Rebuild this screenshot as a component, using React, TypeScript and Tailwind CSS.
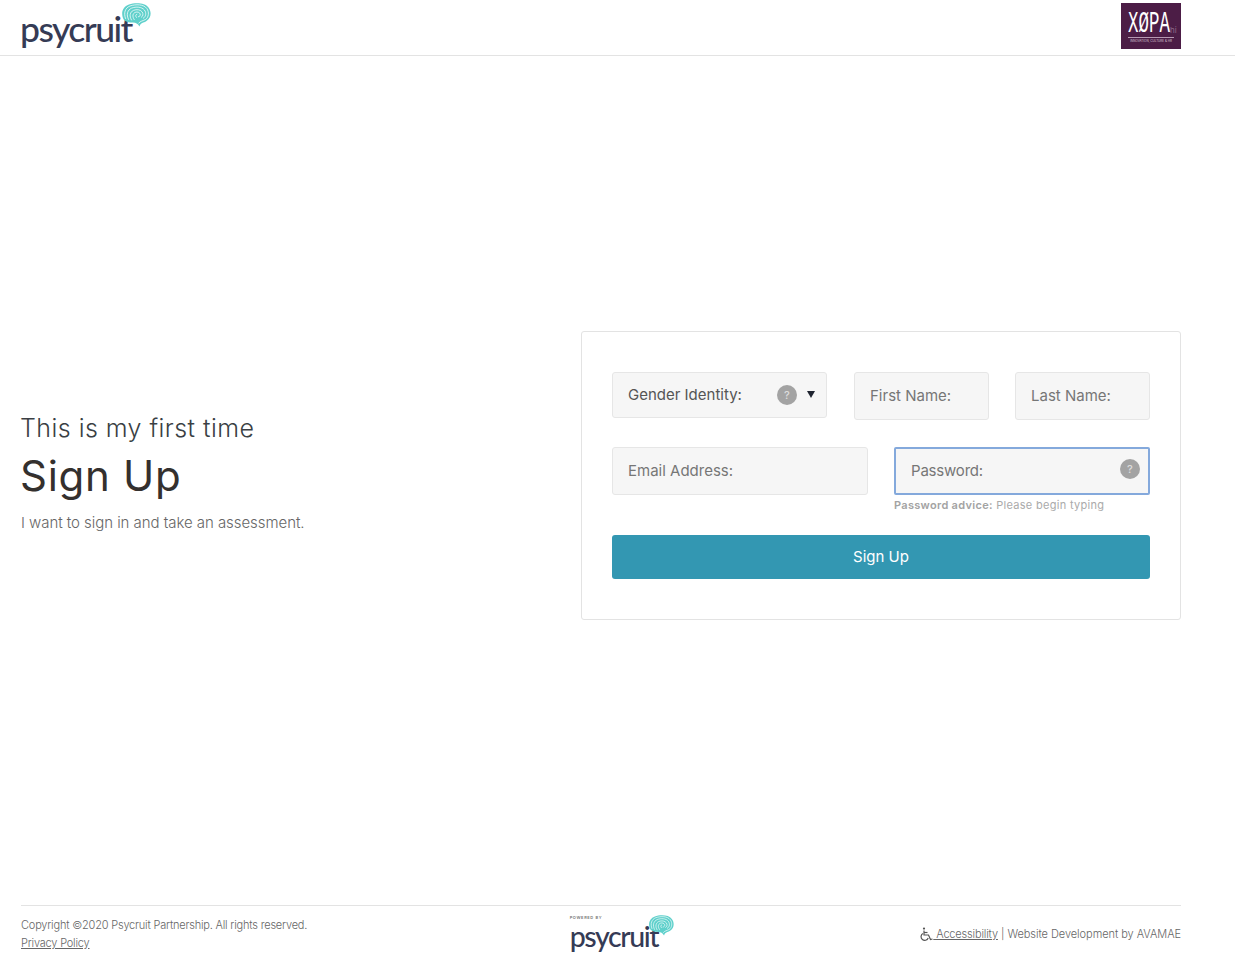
import React from "react";

const FONT = { fontFamily: '"Inter", "Open Sans", "Liberation Sans", sans-serif' };

function Brain({ className }: { className?: string }) {
  return (
    <svg viewBox="0 0 30 24" className={className} fill="none" strokeLinecap="round">
      <path d="M3 17 C-0.5 11 1 4 8 1.5 C14 -0.5 24 -0.5 27.5 4.5 C31 9 30 15.5 25.5 18 C22.5 20 19.5 19.5 18.5 23.5 C16.5 20.5 15 19.5 12 19.5 C8 19.5 5 19 3 17 Z" fill="#5fd0cb" />
      <g stroke="#ffffff" strokeWidth="0.75">
        <path d="M4.5 15.5 C2.5 10 4 5 9 3 C15 1 22.5 1.2 25.8 5.5 C28.4 9 27.8 14.5 24.3 16.6 C21.5 18 19.5 18 17.8 20" />
        <path d="M7.5 16.5 C5 11.5 6.5 7 10.5 5.2 C15 3.4 20.8 3.8 23.4 7 C25.6 10 25 13.6 22.4 15.2" />
        <path d="M10.5 17 C8 13 9 9 12.4 7.4 C15.6 6 19.6 6.6 21.2 9 C22.6 11.2 22 13.2 20.4 14.2" />
        <path d="M13.2 16.6 C11 13.4 11.8 10.4 14.2 9.4 C16.4 8.6 18.6 9.2 19.2 11 C19.6 12.4 18.8 13.6 17.4 13.8" />
        <path d="M15.4 14.4 C14.2 13 14.6 11.6 15.8 11.3" />
      </g>
    </svg>
  );
}

function Logo({ small }: { small?: boolean }) {
  return small ? (
    <div className="relative w-[104px] h-[36px]">
      <span className="absolute left-0 top-[5px] text-[28.5px] leading-[32px] font-medium tracking-[-1.4px] text-[#353b55]" style={{ fontFamily: '"Lato", "Noto Sans", sans-serif' }}>psycruit</span>
      <Brain className="absolute left-[78px] top-0 w-[26px] h-[21px]" />
    </div>
  ) : (
    <div className="relative w-[130px] h-[46px]">
      <span className="absolute left-[-1px] top-[7px] text-[35.5px] leading-[38px] font-medium tracking-[-1.55px] text-[#353b55]" style={{ fontFamily: '"Lato", "Noto Sans", sans-serif' }}>psycruit</span>
      <Brain className="absolute left-[100px] top-0 w-[30px] h-[24px]" />
    </div>
  );
}

function Help() {
  return (
    <span className="flex h-5 w-5 items-center justify-center rounded-full bg-[#a3a3a3] text-[11px] font-medium text-[#dcdcdc]">?</span>
  );
}

const inputClass =
  "h-12 rounded-[3px] border border-[#e6e6e6] bg-[#f6f6f6] pl-[15px] pr-4 pb-[2px] text-[15px] text-[#333] outline-none placeholder:text-[#767676]";

export default function App() {
  return (
    <div className="flex h-[961px] w-full flex-col overflow-hidden bg-white" style={FONT}>
      <header className="flex h-[56px] shrink-0 items-start justify-between border-b border-[#e3e3e3] pl-[21px] pr-[54px]">
        <div className="pt-[3px]"><Logo /></div>
        <div className="mt-[3px] flex h-[46px] w-[60px] flex-col items-start justify-center bg-[#4c1d46] pl-[7px] pt-[3px] text-white">
          <span className="flex items-end">
            <span className="mx-[-15px] w-[72px] scale-x-[0.58] text-center text-[30px] leading-[24px]" style={{ fontFamily: '"Liberation Mono", monospace' }}>XØPA</span>
            <span className="text-[8px] leading-[12px] text-[#8d6a88]">hi</span>
          </span>
          <span className="mt-[1px] w-[46px] border-t border-[#b79ab3] pt-[1px] text-center text-[3px] leading-[4px] text-[#d9c8d6]">INNOVATION, CULTURE &amp; HR</span>
        </div>
      </header>

      <main className="flex flex-1 items-center justify-between pb-[10px] pl-[21px] pr-[54px]">
        <div className="mb-[5px] text-[#333]">
          <p className="-ml-px text-[25px] leading-[30px] font-light tracking-[0.45px] text-[#3a3f44]">This is my first time</p>
          <h1 className="-ml-px mt-[8px] text-[42px] leading-[50px] font-normal tracking-[0.7px] text-[#34302e]">Sign Up</h1>
          <p className="mt-[12px] text-[15px] leading-[20px] font-light tracking-[-0.05px] text-[#666]">I want to sign in and take an assessment.</p>
        </div>

        <section className="h-[289px] w-[600px] rounded-[3px] border border-[#e3e3e3] px-[30px] pt-[40px]">
          <div className="flex items-start">
            <div className="flex h-[46px] w-[215px] items-center rounded-[3px] border border-[#e6e6e6] bg-[#f6f6f6] pl-[15px] pr-[11px]">
              <span className="flex-1 text-[15px] text-[#555]">Gender Identity:</span>
              <Help />
              <svg viewBox="0 0 8 7" className="ml-[10px] mb-[1px] h-[7px] w-[8px]"><path d="M0 0 H8 L4 7 Z" fill="#1f2430" /></svg>
            </div>
            <input className={`${inputClass} ml-[27px] w-[135px]`} placeholder="First Name:" />
            <input className={`${inputClass} ml-[26px] w-[135px]`} placeholder="Last Name:" />
          </div>

          <div className="mt-[27px] flex items-start gap-[26px]">
            <input className={`${inputClass} w-[256px]`} placeholder="Email Address:" />
            <div className="w-[256px]">
              <div className="relative">
                <input className="h-12 w-full rounded-[2px] border-2 border-[#84a9dc] bg-[#f6f6f6] pl-[15px] pr-4 pb-[2px] text-[15px] tracking-[-0.2px] outline-none placeholder:text-[#767676]" placeholder="Password:" />
                <span className="absolute right-[10px] top-[12px]"><Help /></span>
              </div>
              <p className="mt-[3px] text-[11px] leading-[14px] tracking-[0.3px] text-[#aaa]"><b className="font-semibold text-[#a3a3a3]">Password advice:</b> Please begin typing</p>
            </div>
          </div>

          <button className="mt-[23px] flex h-[44px] w-full items-center justify-center rounded-[3px] bg-[#3397b2] text-[15px] text-white">Sign Up</button>
        </section>
      </main>

      <footer className="mx-[21px] mr-[54px] flex h-[56px] shrink-0 items-start justify-between border-t border-[#e3e3e3] text-[11px] text-[#666]">
        <div className="w-[300px] pt-[10px] leading-[18px] font-light tracking-[-0.2px]">
          <p>Copyright ©2020 Psycruit Partnership. All rights reserved.</p>
          <a className="underline">Privacy Policy</a>
        </div>
        <div className="ml-[3px] pt-[9px]">
          <p className="h-0 text-[4px] leading-[6px] font-semibold tracking-[0.6px] text-[#777]">POWERED BY</p>
          <Logo small />
        </div>
        <div className="flex items-center pt-[21px] font-light leading-[14px] tracking-[-0.05px]">
          <svg viewBox="0 0 14 14" className="h-[14px] w-[14px]" fill="none" stroke="#555" strokeWidth="1.2">
            <circle cx="5" cy="1.6" r="1.1" fill="#555" stroke="none" />
            <path d="M5 3.5 V8 H9.5 L11.5 12.5 L13.5 12" />
            <path d="M5 5.5 H8.5" />
            <path d="M3.8 6.5 A3.7 3.7 0 1 0 9.2 11" />
          </svg>
          <a className="underline tracking-[-0.17px]">&nbsp;Accessibility</a>
          <span>&nbsp;| Website Development by AVAMAE</span>
        </div>
      </footer>
    </div>
  );
}
